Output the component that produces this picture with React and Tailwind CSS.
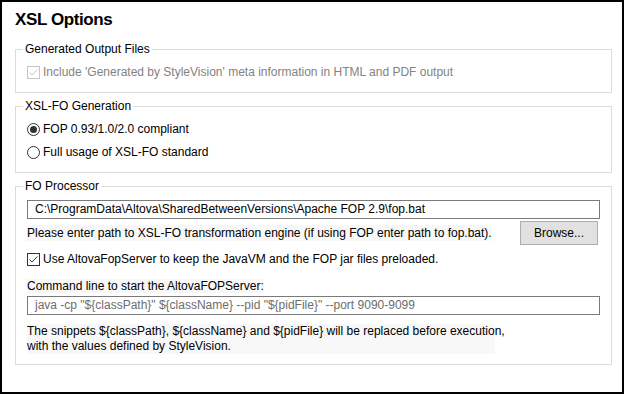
import React from "react";

const CheckBox = ({ disabled }) => (
  <span
    className={`w-[13px] h-[13px] border bg-white flex items-center justify-center shrink-0 ${
      disabled ? "border-[#c6c6c6]" : "border-[#333333]"
    }`}
  >
    <svg width="11" height="11" viewBox="0 0 11 11">
      <path
        d="M1.5 5.5 L4 8 L9.5 2.5"
        fill="none"
        stroke={disabled ? "#c6c6c6" : "#333333"}
        strokeWidth="1"
      />
    </svg>
  </span>
);

const Radio = ({ checked }) => (
  <span className="w-[13px] h-[13px] rounded-full border border-[#333333] bg-white flex items-center justify-center shrink-0">
    {checked && <span className="w-[7px] h-[7px] rounded-full bg-[#333333]" />}
  </span>
);

const Group = ({ title, className, children }) => (
  <fieldset className={`border border-[#dcdcdc] w-[597px] px-[11px] ${className}`}>
    <legend className="-ml-[4px] px-[2px] text-[12px] leading-[16px] text-black">{title}</legend>
    {children}
  </fieldset>
);

const App = () => {
  return (
    <div
      className="w-[624px] h-[394px] border-2 border-black bg-white text-[12px] leading-[16px] text-black pl-[13px]"
      style={{ fontFamily: "'Liberation Sans', Arial, sans-serif" }}
    >
      <div className="mt-[8px] h-[20px] leading-[20px] text-[17px] font-bold tracking-[-0.4px]">XSL Options</div>

      {/* Generated Output Files */}
      <Group title="Generated Output Files" className="mt-[11px] pt-[7px] pb-[12px]">
        <div className="flex items-center gap-[3px] h-[16px]">
          <CheckBox disabled />
          <span className="text-[#838383]">
            Include 'Generated by StyleVision' meta information in HTML and PDF output
          </span>
        </div>
      </Group>

      {/* XSL-FO Generation */}
      <Group title="XSL-FO Generation" className="mt-[5px] pt-[7px] pb-[12px]">
        <div className="flex flex-col gap-[7px]">
          <div className="flex items-center gap-[3px] h-[16px]">
            <Radio checked />
            <span>FOP 0.93/1.0/2.0 compliant</span>
          </div>
          <div className="flex items-center gap-[3px] h-[16px]">
            <Radio />
            <span>Full usage of XSL-FO standard</span>
          </div>
        </div>
      </Group>

      {/* FO Processor */}
      <Group title="FO Processor" className="mt-[5px] pt-[6px] pb-[10px]">
        <div className="h-[19px] w-[573px] border border-[#7a7a7a] px-[7px] leading-[17px]">
          C:\ProgramData\Altova\SharedBetweenVersions\Apache FOP 2.9\fop.bat
        </div>
        <div className="flex items-center justify-between w-[571px] mt-[2px]">
          <span className="bg-[#f8f8f8] whitespace-nowrap">
            Please enter path to XSL-FO transformation engine (if using FOP enter path to fop.bat).
          </span>
          <button className="w-[78px] h-[24px] bg-[#e1e1e1] border border-[#adadad] text-[12px] text-black">
            Browse...
          </button>
        </div>
        <div className="flex items-center gap-[3px] h-[16px] mt-[6px]">
          <CheckBox />
          <span>Use AltovaFopServer to keep the JavaVM and the FOP jar files preloaded.</span>
        </div>
        <div className="mt-[11px] h-[16px]">
          <span className="bg-[#f8f8f8]">Command line to start the AltovaFOPServer:</span>
        </div>
        <div className="mt-[2px] h-[19px] w-[573px] border border-[#7a7a7a] px-[7px] leading-[17px] text-[#6d6d6d] whitespace-nowrap">
          java -cp "$&#123;classPath&#125;" $&#123;className&#125; --pid "$&#123;pidFile&#125;" --port 9090-9099
        </div>
        <div className="mt-[9px] w-[468px] bg-[#f8f8f8] leading-[15px] whitespace-nowrap">
          The snippets $&#123;classPath&#125;, $&#123;className&#125; and $&#123;pidFile&#125; will be replaced before execution,
          <br />
          with the values defined by StyleVision.
        </div>
      </Group>
    </div>
  );
};

export default App;
